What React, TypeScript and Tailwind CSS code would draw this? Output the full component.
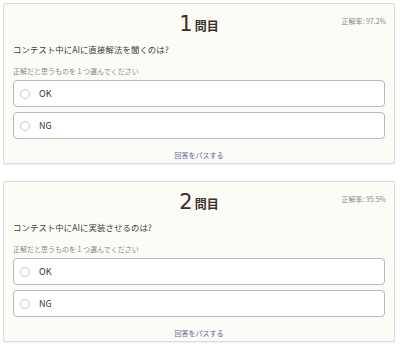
const questions = [
  { no: 1, rate: "97.2%", text: "コンテスト中にAIに直接解法を聞くのは?" },
  { no: 2, rate: "95.5%", text: "コンテスト中にAIに実装させるのは?" },
];

const jp = "font-['Noto_Sans_CJK_JP','Noto_Sans',sans-serif]";

function Option({ label }: { label: string }) {
  return (
    <div className="flex h-[27px] items-center rounded-[4px] border border-[#b9b9b9] bg-white pl-[6px]">
      <span className="h-[10px] w-[10px] rounded-full border border-[#c8c8c8] bg-white" />
      <span className="ml-[9px] text-[9px] leading-none text-[#333]">{label}</span>
    </div>
  );
}

function QuestionCard({ no, rate, text }: { no: number; rate: string; text: string }) {
  return (
    <div className="relative ml-[3px] h-[161px] w-[392px] rounded-[2px] border border-[#dcdcdc] bg-[#fcfcf7] px-[9px] shadow-[0_1px_1px_rgba(0,0,0,0.06)]">
      <span className="absolute right-[8px] top-[14px] text-[7px] leading-none text-[#8a8a8a]">
        正解率: {rate}
      </span>
      <div className="mt-[8px] flex items-baseline justify-center text-[#3a302b]">
        <span className="font-['DejaVu_Sans',sans-serif] text-[21px] leading-[24px]">{no}</span>
        <span className="ml-[2px] text-[12px] font-bold leading-none">問目</span>
      </div>
      <p className="mt-[7px] text-[8.4px] leading-[12px] tracking-[0.1px] text-[#3d3d3d]">{text}</p>
      <p className="mt-[12px] text-[7px] leading-[9px] text-[#8a8a8a]">正解だと思うものを１つ選んでください</p>
      <div className="mt-[4px] flex flex-col gap-[5px]">
        <Option label="OK" />
        <Option label="NG" />
      </div>
      <p className="mt-[12px] text-center text-[7px] leading-[9px] text-[#5d6b9c]">回答をパスする</p>
    </div>
  );
}

export default function App() {
  return (
    <div className={`flex min-h-[347px] w-[400px] flex-col gap-[17px] bg-white pt-[3px] ${jp}`}>
      {questions.map((q) => (
        <QuestionCard key={q.no} {...q} />
      ))}
    </div>
  );
}
